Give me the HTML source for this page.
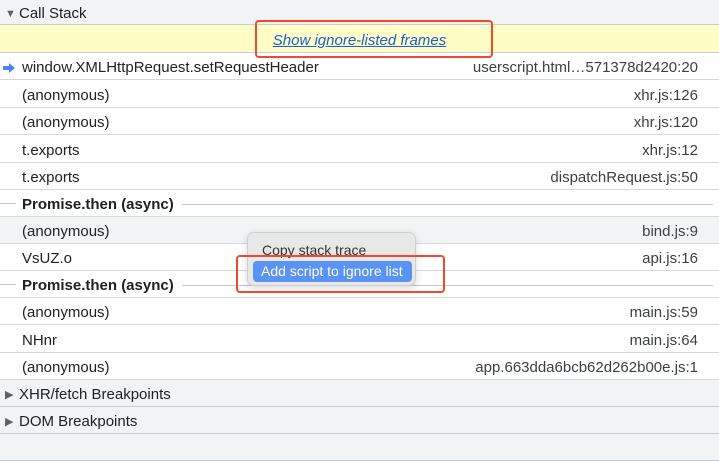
<!DOCTYPE html>
<html><head><style>
*{margin:0;padding:0;box-sizing:border-box}
body{width:719px;height:441px;overflow:hidden;background:#fff;font-family:"Liberation Sans",sans-serif;font-size:15px;color:#202124;position:relative}
.hdr{height:27px;background:#f1f3f4;border-bottom:1px solid #cacdd1;display:flex;align-items:center;padding-left:5px;padding-top:3px}
.tri{font-size:11px;color:#5f6368;margin-right:5px;display:inline-block;width:9px}
.row{height:27px;border-bottom:1px solid #d6d8db;display:flex;align-items:center;padding:3px 21px 0 22px;justify-content:space-between;position:relative}
.row .r{color:#3c4043}
.yel{height:26px;background:#fefdc6;border-bottom:1px solid #cacdd1;display:flex;align-items:center;justify-content:center;padding-top:3px}
.yel a{color:#1a5fd6;font-style:italic;text-decoration:underline}
.async{height:27px;border-bottom:1px solid #d6d8db;position:relative;display:flex;align-items:center;padding-top:2px}
.async:before{content:"";position:absolute;left:0;width:16px;top:13px;border-top:1px solid #c4c6c9}
.async b{margin-left:22px;padding-right:8px;background:#fff}
.async:after{content:"";flex:1;border-top:1px solid #c4c6c9;margin-right:6px}
.box{position:absolute;border:2px solid #f04a2a;border-radius:4px}
</style></head><body>
<div class="hdr" style="height:25px"><span class="tri">▼</span>Call Stack</div>
<div class="yel" style="height:28px"><a>Show ignore-listed frames</a></div>
<div class="row"><span>window.XMLHttpRequest.setRequestHeader</span><span class="r">userscript.html…571378d2420:20</span>
<svg style="position:absolute;left:3px;top:10px" width="12" height="10"><path d="M0 3h6V0l6 5-6 5V7H0z" fill="#4e83ee"/></svg></div>
<div class="row" style="height:28px"><span>(anonymous)</span><span class="r">xhr.js:126</span></div>
<div class="row"><span>(anonymous)</span><span class="r">xhr.js:120</span></div>
<div class="row" style="height:28px"><span>t.exports</span><span class="r">xhr.js:12</span></div>
<div class="row"><span>t.exports</span><span class="r">dispatchRequest.js:50</span></div>
<div class="async"><b>Promise.then (async)</b></div>
<div class="row" style="background:#f1f3f4"><span>(anonymous)</span><span class="r">bind.js:9</span></div>
<div class="row"><span>VsUZ.o</span><span class="r">api.js:16</span></div>
<div class="async"><b>Promise.then (async)</b></div>
<div class="row"><span>(anonymous)</span><span class="r">main.js:59</span></div>
<div class="row" style="height:28px"><span>NHnr</span><span class="r">main.js:64</span></div>
<div class="row"><span>(anonymous)</span><span class="r">app.663dda6bcb62d262b00e.js:1</span></div>
<div class="hdr"><span class="tri">▶</span>XHR/fetch Breakpoints</div>
<div class="hdr"><span class="tri">▶</span>DOM Breakpoints</div>
<div class="hdr"></div>
<div style="position:absolute;left:247px;top:232px;width:169px;height:54px;background:#e8e8e8;border:1px solid #cfcfcf;border-radius:7px;box-shadow:0 2px 8px rgba(0,0,0,.15);font-size:14px">
<div style="position:absolute;left:14px;top:9px;color:#333">Copy stack trace</div>
<div style="position:absolute;left:5px;top:28px;width:159px;height:21px;background:#5b93f5;border-radius:4px;color:#fff;padding-left:8px;line-height:21px">Add script to ignore list</div>
</div>
<div class="box" style="left:255px;top:20px;width:238px;height:38px"></div>
<div class="box" style="left:236px;top:255px;width:209px;height:38px"></div>
</body></html>
